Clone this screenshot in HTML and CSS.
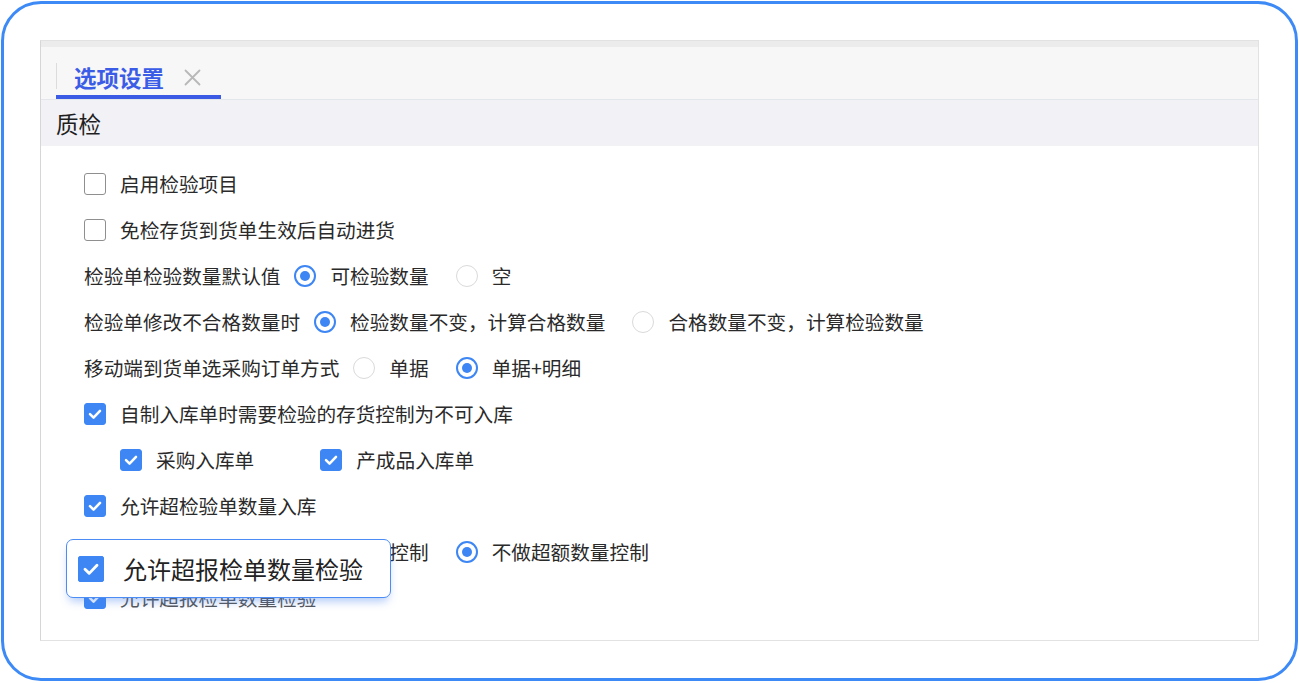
FILE: index.html
```html
<!DOCTYPE html>
<html lang="zh">
<head>
<meta charset="utf-8">
<title>选项设置</title>
<link rel="stylesheet" href="styles.css">
</head>
<body>
<div class="frame">
  <div class="panel">
    <div class="tabbar">
      <div class="tab">
        <span class="tab-title">选项设置</span>
        <svg class="tab-close" width="17" height="17" viewBox="0 0 17 17"><path d="M1.5 1.5 L15.5 15.5 M15.5 1.5 L1.5 15.5" stroke="#b8b8b8" stroke-width="1.8" fill="none" stroke-linecap="round"/></svg>
      </div>
    </div>
    <div class="section">质检</div>
    <div class="content">
      <div class="row">
        <span class="check"></span><span class="text">启用检验项目</span>
      </div>
      <div class="row">
        <span class="check"></span><span class="text">免检存货到货单生效后自动进货</span>
      </div>
      <div class="row">
        <span class="label">检验单检验数量默认值</span>
        <span class="radio on"></span><span class="opt">可检验数量</span>
        <span class="radio"></span><span class="opt">空</span>
      </div>
      <div class="row">
        <span class="label">检验单修改不合格数量时</span>
        <span class="radio on"></span><span class="opt">检验数量不变，计算合格数量</span>
        <span class="radio"></span><span class="opt">合格数量不变，计算检验数量</span>
      </div>
      <div class="row">
        <span class="label">移动端到货单选采购订单方式</span>
        <span class="radio"></span><span class="opt">单据</span>
        <span class="radio on"></span><span class="opt">单据+明细</span>
      </div>
      <div class="row">
        <span class="check on"><svg viewBox="0 0 22 22"><path d="M5.5 11.2 L9.4 15 L16.5 7.6" stroke="#fff" stroke-width="2.8" fill="none" stroke-linecap="round" stroke-linejoin="round"/></svg></span><span class="text">自制入库单时需要检验的存货控制为不可入库</span>
      </div>
      <div class="row sub">
        <span class="item"><span class="check on"><svg viewBox="0 0 22 22"><path d="M5.5 11.2 L9.4 15 L16.5 7.6" stroke="#fff" stroke-width="2.8" fill="none" stroke-linecap="round" stroke-linejoin="round"/></svg></span><span class="text">采购入库单</span></span>
        <span class="item"><span class="check on"><svg viewBox="0 0 22 22"><path d="M5.5 11.2 L9.4 15 L16.5 7.6" stroke="#fff" stroke-width="2.8" fill="none" stroke-linecap="round" stroke-linejoin="round"/></svg></span><span class="text">产成品入库单</span></span>
      </div>
      <div class="row">
        <span class="check on"><svg viewBox="0 0 22 22"><path d="M5.5 11.2 L9.4 15 L16.5 7.6" stroke="#fff" stroke-width="2.8" fill="none" stroke-linecap="round" stroke-linejoin="round"/></svg></span><span class="text">允许超检验单数量入库</span>
      </div>
      <div class="row">
        <span class="label">超检验单数量控制方式</span>
        <span class="radio"></span><span class="opt">按比例控制</span>
        <span class="radio on"></span><span class="opt">不做超额数量控制</span>
      </div>
      <div class="row faded">
        <span class="check on"><svg viewBox="0 0 22 22"><path d="M5.5 11.2 L9.4 15 L16.5 7.6" stroke="#fff" stroke-width="2.8" fill="none" stroke-linecap="round" stroke-linejoin="round"/></svg></span><span class="text">允许超报检单数量检验</span>
      </div>
    </div>
  </div>
  <div class="popup">
    <span class="check big on"><svg viewBox="0 0 22 22"><path d="M5.5 11.2 L9.4 15 L16.5 7.6" stroke="#fff" stroke-width="2.6" fill="none" stroke-linecap="round" stroke-linejoin="round"/></svg></span>
    <span class="popup-text">允许超报检单数量检验</span>
  </div>
</div>
</body>
</html>
```

FILE: styles.css
```css
* { box-sizing: border-box; }
html, body { margin: 0; padding: 0; background: #fff; }
body {
  font-family: "Noto Sans CJK SC", "Noto Sans", sans-serif;
  color: #2a2a2a;
}
.frame {
  position: relative;
  margin: 1px 0 0 1px;
  width: 1297px;
  height: 680px;
  border: 3px solid #3d8af7;
  border-radius: 40px;
  padding: 36px 0 0 36px;
}
.panel {
  width: 1219px;
  height: 601px;
  border: 1px solid #e2e2e2;
  border-left-color: #d6d6d6;
  display: flex;
  flex-direction: column;
}
.tabbar {
  height: 59px;
  border-top: 6px solid #ececec;
  border-bottom: 1px solid #e3e6eb;
  background: #f7f7f7;
  display: flex;
  padding-left: 15px;
}
.tab {
  position: relative;
  width: 165px;
  height: 52px;
  border-bottom: 4px solid #3b5be4;
  display: flex;
  align-items: center;
  padding: 12px 0 0 18px;
}
.tab::before {
  content: "";
  position: absolute;
  left: 0;
  top: 16px;
  width: 1px;
  height: 26px;
  background: #dcdcdc;
}
.tab-title {
  font-size: 22.5px;
  font-weight: 700;
  color: #3b5ce6;
  line-height: 1;
}
.tab-close { margin-left: 20px; margin-top: 1px; }
.section {
  height: 46px;
  background: #f2f2f6;
  padding-left: 15px;
  display: flex;
  align-items: center;
  font-size: 22.5px;
  color: #1f1f1f;
  line-height: 1;
}
.content {
  padding: 15px 0 0 43px;
  display: flex;
  flex-direction: column;
}
.row {
  height: 46px;
  display: flex;
  align-items: center;
  font-size: 19.65px;
  line-height: 1;
}
.row.sub { padding-left: 36px; gap: 66px; }
.row.faded { color: #555; }
.item { display: flex; align-items: center; }
.check {
  width: 22px;
  height: 22px;
  border: 1px solid #8f8f8f;
  border-radius: 3px;
  margin-right: 14px;
  flex: none;
  display: flex;
}
.check.on { background: #3d86f4; border-color: #3d86f4; }
.check svg { width: 100%; height: 100%; display: block; }
.label { margin-right: 14px; }
.radio {
  width: 22px;
  height: 22px;
  border-radius: 50%;
  border: 1px solid #dadada;
  margin-right: 14px;
  flex: none;
  display: flex;
  align-items: center;
  justify-content: center;
}
.radio.on { border: 2px solid #3d86f4; }
.radio.on::after {
  content: "";
  width: 10px;
  height: 10px;
  border-radius: 50%;
  background: #3d86f4;
}
.opt { margin-right: 27px; }
.popup {
  position: absolute;
  left: 62px;
  top: 535px;
  width: 325px;
  height: 59px;
  background: #fff;
  border: 1px solid #4b8cf5;
  border-radius: 7px;
  box-shadow: 0 6px 10px -3px rgba(70, 130, 240, 0.45);
  display: flex;
  align-items: center;
  padding-left: 11px;
}
.check.big {
  width: 26px;
  height: 26px;
  margin-right: 19px;
  border-radius: 2px;
}
.popup-text {
  font-size: 24px;
  line-height: 1;
  color: #222;
}
```
